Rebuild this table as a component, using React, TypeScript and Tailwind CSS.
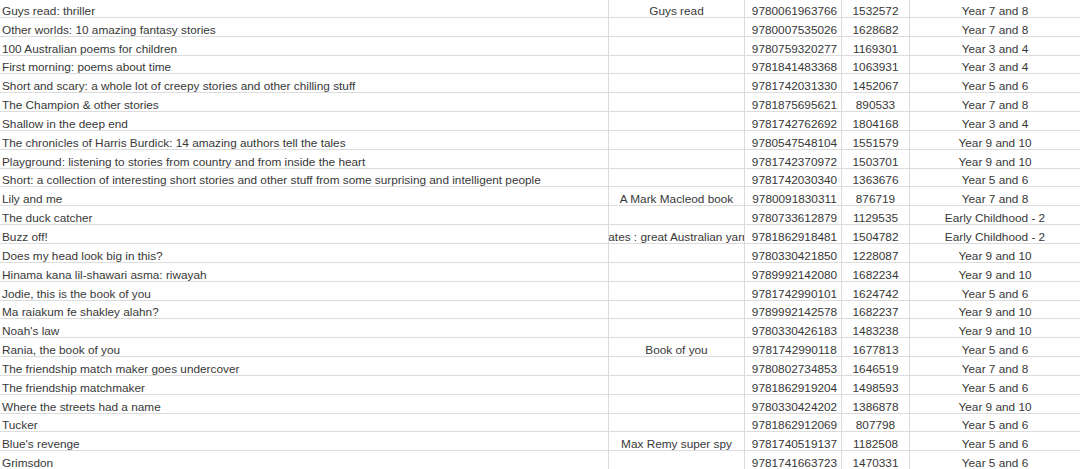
const rows: [string, string, string, string, string][] = [
  ['Guys read: thriller', 'Guys read', '9780061963766', '1532572', 'Year 7 and 8'],
  ['Other worlds: 10 amazing fantasy stories', '', '9780007535026', '1628682', 'Year 7 and 8'],
  ['100 Australian poems for children', '', '9780759320277', '1169301', 'Year 3 and 4'],
  ['First morning: poems about time', '', '9781841483368', '1063931', 'Year 3 and 4'],
  ['Short and scary: a whole lot of creepy stories and other chilling stuff', '', '9781742031330', '1452067', 'Year 5 and 6'],
  ['The Champion & other stories', '', '9781875695621', '890533', 'Year 7 and 8'],
  ['Shallow in the deep end', '', '9781742762692', '1804168', 'Year 3 and 4'],
  ['The chronicles of Harris Burdick: 14 amazing authors tell the tales', '', '9780547548104', '1551579', 'Year 9 and 10'],
  ['Playground: listening to stories from country and from inside the heart', '', '9781742370972', '1503701', 'Year 9 and 10'],
  ['Short: a collection of interesting short stories and other stuff from some surprising and intelligent people', '', '9781742030340', '1363676', 'Year 5 and 6'],
  ['Lily and me', 'A Mark Macleod book', '9780091830311', '876719', 'Year 7 and 8'],
  ['The duck catcher', '', '9780733612879', '1129535', 'Early Childhood - 2'],
  ['Buzz off!', 'Mates : great Australian yarns', '9781862918481', '1504782', 'Early Childhood - 2'],
  ['Does my head look big in this?', '', '9780330421850', '1228087', 'Year 9 and 10'],
  ['Hinama kana lil-shawari asma: riwayah', '', '9789992142080', '1682234', 'Year 9 and 10'],
  ['Jodie, this is the book of you', '', '9781742990101', '1624742', 'Year 5 and 6'],
  ['Ma raiakum fe shakley alahn?', '', '9789992142578', '1682237', 'Year 9 and 10'],
  ["Noah's law", '', '9780330426183', '1483238', 'Year 9 and 10'],
  ['Rania, the book of you', 'Book of you', '9781742990118', '1677813', 'Year 5 and 6'],
  ['The friendship match maker goes undercover', '', '9780802734853', '1646519', 'Year 7 and 8'],
  ['The friendship matchmaker', '', '9781862919204', '1498593', 'Year 5 and 6'],
  ['Where the streets had a name', '', '9780330424202', '1386878', 'Year 9 and 10'],
  ['Tucker', '', '9781862912069', '807798', 'Year 5 and 6'],
  ["Blue's revenge", 'Max Remy super spy', '9781740519137', '1182508', 'Year 5 and 6'],
  ['Grimsdon', '', '9781741663723', '1470331', 'Year 5 and 6'],
];

export default function App() {
  return (
    <div className="h-[469px] w-[1080px] overflow-hidden bg-white font-['Liberation_Sans',_'Noto_Sans_CJK_SC',_sans-serif] text-[11.8px] leading-[12px] text-[#383838]">
      <div className="-mt-[1px]">
        {rows.map((r, i) => (
          <div key={i} className="grid h-[18.85px] grid-cols-[609px_136px_97px_68px_170px] border-b border-[#dcdcdc]">
            <div className="flex items-end overflow-hidden whitespace-nowrap border-r border-[#dcdcdc] pl-[2px]">{r[0]}</div>
            <div className="flex items-end justify-center overflow-hidden whitespace-nowrap border-r border-[#dcdcdc]">{r[1]}</div>
            <div className="flex items-end justify-center overflow-hidden whitespace-nowrap border-r border-[#dcdcdc] pl-[3px]">{r[2]}</div>
            <div className="flex items-end justify-center overflow-hidden whitespace-nowrap border-r border-[#dcdcdc]">{r[3]}</div>
            <div className="flex items-end justify-center overflow-hidden whitespace-nowrap">{r[4]}</div>
          </div>
        ))}
      </div>
    </div>
  );
}
